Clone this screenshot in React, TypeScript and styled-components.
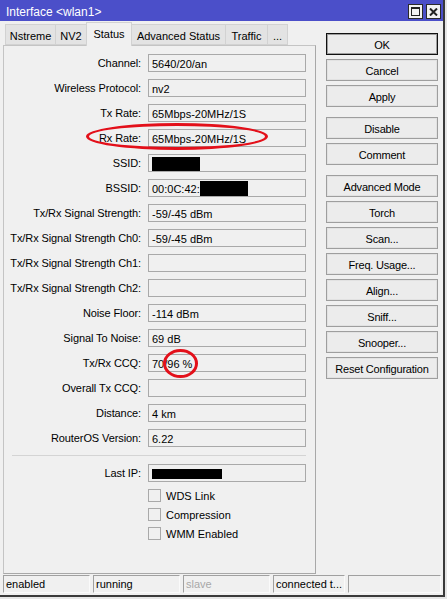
import React from 'react'
import styled, { createGlobalStyle } from 'styled-components'

const GlobalStyle = createGlobalStyle`
  html, body {
    margin: 0;
    padding: 0;
  }
  body {
    background: #e6e6e6;
    font-family: "Liberation Sans", Arial, sans-serif;
    font-size: 11px;
    color: #000;
  }
`

const Window = styled.div`
  width: 443px;
  height: 595px;
  display: flex;
  flex-direction: column;
  background: #f0f0f0;
  border-right: 2px solid #3a3a3a;
  border-bottom: 2px solid #3a3a3a;
`

const TitleBar = styled.div`
  height: 21px;
  flex: none;
  box-sizing: border-box;
  display: flex;
  align-items: center;
  justify-content: space-between;
  padding: 2px 2px 0 6px;
  background: #4b4fc9;
  color: #fff;
  font-size: 12px;
`

const TitleButtons = styled.div`
  display: flex;
  gap: 3px;
`

const TitleButton = styled.div`
  width: 13px;
  height: 13px;
  display: flex;
  align-items: center;
  justify-content: center;
  background: #f2f2f2;
  border: 1px solid #2a2a2a;
`

const Body = styled.div`
  flex: 1;
  display: flex;
  min-height: 0;
`

const LeftColumn = styled.div`
  width: 313px;
  margin-left: 3px;
  display: flex;
  flex-direction: column;
`

const TabRow = styled.div`
  height: 24px;
  flex: none;
  display: flex;
  align-items: flex-end;
  padding-left: 3px;
  position: relative;
  z-index: 1;
`

const Tab = styled.div<{ $w: number; $active?: boolean }>`
  width: ${p => p.$w}px;
  height: ${p => (p.$active ? 24 : 21)}px;
  box-sizing: border-box;
  margin-left: -1px;
  margin-bottom: ${p => (p.$active ? -1 : 0)}px;
  display: flex;
  align-items: center;
  justify-content: center;
  padding-top: ${p => (p.$active ? 0 : 2)}px;
  padding-bottom: ${p => (p.$active ? 1 : 0)}px;
  background: ${p => (p.$active ? '#f0f0f0' : '#e3e3e3')};
  border: 1px solid #d2d2d2;
  border-bottom: ${p => (p.$active ? 'none' : '1px solid #d2d2d2')};
  white-space: nowrap;
`

const Panel = styled.div`
  flex: 1;
  position: relative;
  box-sizing: border-box;
  border: 1px solid #c4c4c4;
  border-right-color: #a8a8a8;
  border-bottom-color: #a8a8a8;
  padding: 8px 9px 0 0;
`

const FormGrid = styled.div`
  display: grid;
  grid-template-columns: 137px 158px;
  grid-auto-rows: 18px;
  column-gap: 7px;
  row-gap: 7px;
`

const Label = styled.div`
  text-align: right;
  line-height: 19px;
  white-space: nowrap;
  letter-spacing: -0.1px;
`

const Field = styled.div`
  box-sizing: border-box;
  border: 1px solid #a9a9a9;
  background: #f0f0f0;
  padding: 1px 0 0 3px;
  line-height: 16px;
  white-space: nowrap;
  overflow: hidden;
  display: flex;
  align-items: center;
`

const Redacted = styled.span<{ $w: number; $h: number }>`
  display: inline-block;
  width: ${p => p.$w}px;
  height: ${p => p.$h}px;
  background: #000;
`

const Separator = styled.div`
  margin: 8px 0 8px 8px;
  border-top: 1px solid #d4d4d4;
`

const CheckList = styled.div`
  margin: 7px 0 0 144px;
  display: flex;
  flex-direction: column;
  gap: 6px;
`

const CheckRow = styled.label`
  display: flex;
  align-items: center;
  gap: 5px;
  height: 13px;
`

const CheckBox = styled.span`
  width: 13px;
  height: 13px;
  box-sizing: border-box;
  border: 1px solid #a9a9a9;
  background: #f0f0f0;
`

const Mark = styled.div<{ $left: number; $top: number; $w: number; $h: number }>`
  position: absolute;
  left: ${p => p.$left}px;
  top: ${p => p.$top}px;
  width: ${p => p.$w}px;
  height: ${p => p.$h}px;
  box-sizing: border-box;
  border: 3px solid #e3101a;
  border-radius: 50%;
  pointer-events: none;
`

const ButtonColumn = styled.div`
  width: 112px;
  margin-left: 10px;
  padding-top: 12px;
  display: flex;
  flex-direction: column;
  gap: 10px;
`

const ButtonGroup = styled.div`
  display: flex;
  flex-direction: column;
  gap: 4px;
`

const Button = styled.button<{ $default?: boolean }>`
  height: 22px;
  width: 112px;
  box-sizing: border-box;
  padding: 1px 0 0;
  margin: 0;
  font-family: inherit;
  font-size: 11px;
  letter-spacing: -0.2px;
  color: #000;
  background: #ececec;
  border: 1px solid ${p => (p.$default ? '#111' : '#9e9e9e')};
  box-shadow: inset 0 0 0 1px ${p => (p.$default ? '#9e9e9e' : '#e2e2e2')};
  cursor: default;
`

const StatusBar = styled.div`
  height: 21px;
  flex: none;
  box-sizing: border-box;
  display: grid;
  grid-template-columns: 87px 87px 87px 72px 1fr;
  column-gap: 3px;
  padding: 1px 2px 2px 3px;
`

const StatusCell = styled.div<{ $muted?: boolean }>`
  box-sizing: border-box;
  border: 1px solid #a0a0a0;
  border-right-color: #fafafa;
  border-bottom-color: #fafafa;
  padding-left: 2px;
  line-height: 17px;
  white-space: nowrap;
  overflow: hidden;
  color: ${p => (p.$muted ? '#a8a8a8' : '#000')};
`

const tabs = [
  { name: 'Nstreme', w: 51 },
  { name: 'NV2', w: 32 },
  { name: 'Status', w: 46, active: true },
  { name: 'Advanced Status', w: 95 },
  { name: 'Traffic', w: 43 },
  { name: '...', w: 21 },
]

const rows: { label: string; value: React.ReactNode }[] = [
  { label: 'Channel:', value: '5640/20/an' },
  { label: 'Wireless Protocol:', value: 'nv2' },
  { label: 'Tx Rate:', value: '65Mbps-20MHz/1S' },
  { label: 'Rx Rate:', value: '65Mbps-20MHz/1S' },
  { label: 'SSID:', value: <Redacted $w={48} $h={14} /> },
  { label: 'BSSID:', value: <>00:0C:42:<Redacted $w={48} $h={15} /></> },
  { label: 'Tx/Rx Signal Strength:', value: '-59/-45 dBm' },
  { label: 'Tx/Rx Signal Strength Ch0:', value: '-59/-45 dBm' },
  { label: 'Tx/Rx Signal Strength Ch1:', value: '' },
  { label: 'Tx/Rx Signal Strength Ch2:', value: '' },
  { label: 'Noise Floor:', value: '-114 dBm' },
  { label: 'Signal To Noise:', value: '69 dB' },
  { label: 'Tx/Rx CCQ:', value: '70/96 %' },
  { label: 'Overall Tx CCQ:', value: '' },
  { label: 'Distance:', value: '4 km' },
  { label: 'RouterOS Version:', value: '6.22' },
]

const buttonGroups = [
  ['OK', 'Cancel', 'Apply'],
  ['Disable', 'Comment'],
  ['Advanced Mode', 'Torch', 'Scan...', 'Freq. Usage...', 'Align...', 'Sniff...', 'Snooper...', 'Reset Configuration'],
]

const checks = ['WDS Link', 'Compression', 'WMM Enabled']

const App: React.FC = () => {
  return (
    <>
      <GlobalStyle />
      <Window>
        <TitleBar>
          <span>Interface &lt;wlan1&gt;</span>
          <TitleButtons>
            <TitleButton>
              <svg width="9" height="9" viewBox="0 0 9 9">
                <rect x="0.5" y="0.5" width="8" height="8" fill="none" stroke="#222" />
                <rect x="0" y="0" width="9" height="2" fill="#222" />
              </svg>
            </TitleButton>
            <TitleButton>
              <svg width="9" height="8" viewBox="0 0 9 8">
                <path d="M1 0.5 L8 7.5 M8 0.5 L1 7.5" stroke="#222" strokeWidth="2" />
              </svg>
            </TitleButton>
          </TitleButtons>
        </TitleBar>
        <Body>
          <LeftColumn>
            <TabRow>
              {tabs.map(t => (
                <Tab key={t.name} $w={t.w} $active={t.active}>{t.name}</Tab>
              ))}
            </TabRow>
            <Panel>
              <FormGrid>
                {rows.map(r => (
                  <React.Fragment key={r.label}>
                    <Label>{r.label}</Label>
                    <Field>{r.value}</Field>
                  </React.Fragment>
                ))}
              </FormGrid>
              <Separator />
              <FormGrid>
                <Label>Last IP:</Label>
                <Field><Redacted $w={70} $h={10} /></Field>
              </FormGrid>
              <CheckList>
                {checks.map(c => (
                  <CheckRow key={c}>
                    <CheckBox />
                    {c}
                  </CheckRow>
                ))}
              </CheckList>
              <Mark $left={82} $top={77} $w={182} $h={27} />
              <Mark $left={159} $top={303} $w={35} $h={29} />
            </Panel>
          </LeftColumn>
          <ButtonColumn>
            {buttonGroups.map((g, i) => (
              <ButtonGroup key={i}>
                {g.map(b => (
                  <Button key={b} $default={b === 'OK'}>{b}</Button>
                ))}
              </ButtonGroup>
            ))}
          </ButtonColumn>
        </Body>
        <StatusBar>
          <StatusCell>enabled</StatusCell>
          <StatusCell>running</StatusCell>
          <StatusCell $muted>slave</StatusCell>
          <StatusCell>connected t...</StatusCell>
          <StatusCell />
        </StatusBar>
      </Window>
    </>
  )
}

export default App
